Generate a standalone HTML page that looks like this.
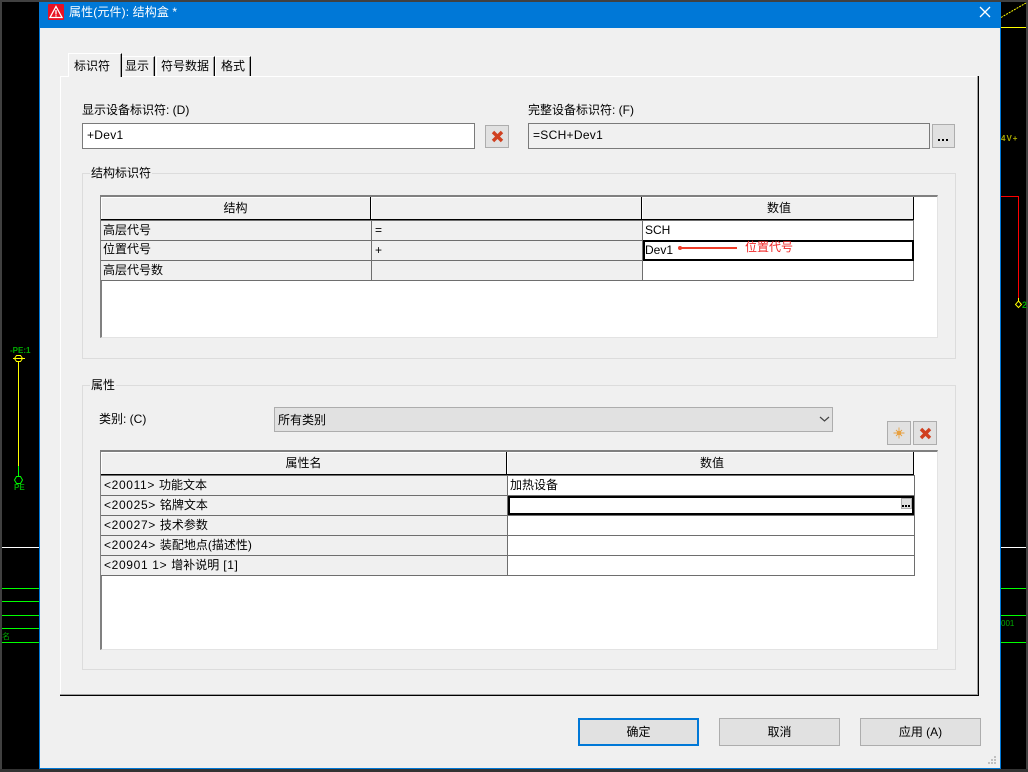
<!DOCTYPE html>
<html><head><meta charset="utf-8"><style>
html,body{margin:0;padding:0}
body{width:1028px;height:772px;overflow:hidden;position:relative;background:#000;font:12px/16px "Liberation Sans","Noto Sans CJK SC",sans-serif;color:#000}
div,span.t{position:absolute;box-sizing:border-box}
.t{white-space:nowrap}
.btn{background:#e1e1e1;border:1px solid #adadad;text-align:center}
.inp{border:1px solid #7a7a7a;background:#fff;padding:3px 4px;letter-spacing:.3px}
.grp{border:1px solid #dcdcdc}
.gb{background:#f0f0f0;padding:0 1px}
.h{background:#f0f0f0;text-align:center;line-height:22px;border-bottom:1px solid #000;border-right:1px solid #000;box-shadow:inset 1px 1px 0 #fff}
.c{line-height:19px;padding-left:2px;overflow:hidden;white-space:nowrap;border-bottom:1px solid #6e6e6e;border-right:1px solid #6e6e6e}
.g{background:#f0f0f0}
.w{background:#fff}
.l{letter-spacing:.65px}
.tab{background:#f0f0f0;border-top:1px solid #fff;border-left:1px solid #fff;border-right:1px solid #000;box-shadow:inset -1px 0 0 #a0a0a0}
</style></head><body>
<svg width="1028" height="772" style="position:absolute;left:0;top:0">
<rect x="0" y="0" width="2" height="772" fill="#404040"/>
<rect x="1026" y="0" width="2" height="772" fill="#404040"/>
<rect x="0" y="0" width="1028" height="2" fill="#404040"/>
<rect x="0" y="769" width="1028" height="3" fill="#333"/>
<path d="M1001 17.5L1026 3" stroke="#ff0" stroke-width="1" stroke-dasharray="2 1"/>
<path d="M1001 27.5H1026" stroke="#ff0"/>
<path d="M2 547.5H39M1001 547.5H1026" stroke="#fff"/>
<path d="M2 588.5H39M2 601.5H39M2 615.5H39M2 628.5H39M2 642.5H39M1001 588.5H1026M1001 615.5H1026M1001 642.5H1026" stroke="#0f0"/>
<path d="M18.500 362V466" stroke="#ff0"/><path d="M18.500 466V476" stroke="#0f0"/>
<path d="M13 358.500H25M16.500 355.500H20.500L22.500 358.500L20.500 361.500H16.500L14.500 358.500Z" stroke="#ff0" fill="none"/>
<path d="M16.500 476.500H20.500L22.500 480L20.500 483.500H16.500L14.500 480Z" stroke="#0f0" fill="none"/>
<path d="M1001 196.500H1018.500V298" stroke="#f00" fill="none"/>
<path d="M1018.500 298V301M1018.500 301L1021.500 304.500L1018.500 307.500L1015.500 304.500Z" stroke="#ff0" fill="none"/>
<text x="10" y="353" font-size="8" font-weight="bold" fill="#0a0" font-family="Liberation Sans">-PE:1</text>
<text x="14" y="490" font-size="8" font-weight="bold" fill="#0a0" font-family="Liberation Sans">PE</text>
<text x="1022" y="308" font-size="9" font-weight="bold" fill="#0a0" font-family="Liberation Sans">2</text>
<text x="1001" y="141" font-size="8" font-weight="bold" fill="#aa0" font-family="Liberation Sans" letter-spacing="1">4V+</text>
<text x="1001" y="626" font-size="8" fill="#0a0" font-family="Liberation Sans">001</text>
<text x="2" y="639" font-size="8" fill="#0a0" font-family="Noto Sans CJK SC">名</text>
</svg>

<!-- window -->
<div style="left:39px;top:2px;width:962px;height:767px;background:#f0f0f0;border:1px solid #0078d7;border-top:0"></div>
<div style="left:39px;top:2px;width:962px;height:26px;background:#0078d7"></div>
<svg width="17" height="16" style="position:absolute;left:48px;top:4px">
<rect width="16" height="16" x="0" y="0" fill="#e81123" rx="1"/>
<path d="M8 2.500L14 13.500H2Z" fill="none" stroke="#fff" stroke-width="1.300"/>
<path d="M8 6V10.500M8 11.200V12.500" stroke="#fff" stroke-width="1.300"/>
</svg>
<span class="t" style="left:69px;top:4px;color:#fff;font-size:12px;letter-spacing:.12px">属性(元件): 结构盒 *</span>
<svg width="12" height="12" style="position:absolute;left:979px;top:6px"><path d="M1 1L11 11M11 1L1 11" stroke="#fff" stroke-width="1.300"/></svg>

<!-- tab page -->
<div style="left:60px;top:76px;width:919px;height:620px;background:#f0f0f0;border:1px solid #fff;border-right:0;border-bottom:0"></div>
<div style="left:977px;top:76px;width:1px;height:619px;background:#a0a0a0"></div>
<div style="left:978px;top:76px;width:1px;height:620px;background:#000"></div>
<div style="left:60px;top:694px;width:918px;height:1px;background:#a0a0a0"></div>
<div style="left:60px;top:695px;width:919px;height:1px;background:#000"></div>

<!-- tabs -->
<div class="tab" style="left:68px;top:53px;width:54px;height:24px"></div>
<span class="t" style="left:74px;top:58px">标识符</span>
<div class="tab" style="left:122px;top:56px;width:33px;height:20px;border-left:0"></div>
<span class="t" style="left:125px;top:58px">显示</span>
<div class="tab" style="left:156px;top:56px;width:59px;height:20px"></div>
<span class="t" style="left:161px;top:58px">符号数据</span>
<div class="tab" style="left:215px;top:56px;width:36px;height:20px"></div>
<span class="t" style="left:221px;top:58px">格式</span>

<!-- top fields -->
<span class="t" style="left:82px;top:102px">显示设备标识符: (D)</span>
<div class="inp" style="left:82px;top:123px;width:393px;height:26px">+Dev1</div>
<div class="btn" style="left:485px;top:125px;width:24px;height:23px"></div>
<svg width="14" height="14" style="position:absolute;left:491px;top:130px"><path d="M2 2L11 11M11 2L2 11" stroke="#d04020" stroke-width="3.400"/></svg>
<span class="t" style="left:528px;top:102px">完整设备标识符: (F)</span>
<div class="inp" style="left:528px;top:123px;width:402px;height:26px;background:#f0f0f0">=SCH+Dev1</div>
<div class="btn" style="left:932px;top:124px;width:23px;height:24px"></div>
<svg width="12" height="3" style="position:absolute;left:938px;top:139px"><path d="M0 0h2v2h-2zM4 0h2v2h-2zM8 0h2v2h-2z" fill="#000"/></svg>

<!-- group 1 -->
<div class="grp" style="left:82px;top:173px;width:874px;height:186px"></div>
<span class="t gb" style="left:90px;top:165px">结构标识符</span>
<div style="left:100px;top:195px;width:838px;height:143px;background:#fff;border-left:2px solid #808080;border-top:2px solid #808080;border-right:1px solid #e3e3e3;border-bottom:1px solid #e3e3e3"></div>
<div class="h" style="left:101px;top:197px;width:270px;height:23px">结构</div>
<div class="h" style="left:371px;top:197px;width:271px;height:23px"></div>
<div class="h" style="left:642px;top:197px;width:272px;height:23px;padding-left:3px">数值</div>
<div class="c g" style="left:101px;top:220px;width:271px;height:21px;border-top:1px solid #6e6e6e">高层代号</div>
<div class="c g" style="left:101px;top:241px;width:271px;height:20px;line-height:17px">位置代号</div>
<div class="c g" style="left:101px;top:261px;width:271px;height:20px">高层代号数</div>
<div class="c g" style="left:372px;top:220px;width:271px;height:21px;border-top:1px solid #6e6e6e;padding-left:3px">=</div>
<div class="c g" style="left:372px;top:241px;width:271px;height:20px;padding-left:3px">+</div>
<div class="c g" style="left:372px;top:261px;width:271px;height:20px"></div>
<div class="c w" style="left:643px;top:220px;width:271px;height:21px;border-top:1px solid #6e6e6e">SCH</div>
<div class="c w" style="left:643px;top:261px;width:271px;height:20px"></div>
<div class="c w" style="left:643px;top:240px;width:271px;height:21px;border:2px solid #000;padding-left:0;line-height:17px">Dev1</div>
<svg width="62" height="8" style="position:absolute;left:676px;top:244px"><circle cx="4" cy="4" r="2" fill="#f03c28"/><path d="M4 4H61" stroke="#f03c28" stroke-width="2"/></svg>
<span class="t" style="left:745px;top:239px;color:#f02828">位置代号</span>

<!-- group 2 -->
<div class="grp" style="left:82px;top:385px;width:874px;height:285px"></div>
<span class="t gb" style="left:90px;top:377px">属性</span>
<span class="t" style="left:99px;top:411px">类别: (C)</span>
<div class="btn" style="left:274px;top:407px;width:559px;height:25px;text-align:left;padding:4px 3px">所有类别</div>
<svg width="12" height="8" style="position:absolute;left:819px;top:416px"><path d="M1 1L5.500 5L10 1" fill="none" stroke="#444" stroke-width="1.200"/></svg>
<div class="btn" style="left:887px;top:421px;width:24px;height:24px"></div>
<svg width="14" height="14" style="position:absolute;left:892px;top:426px"><path d="M7 1.500V12.500M1.500 7H12.500M4 4L10 10M10 4L4 10" stroke="#e8a040" stroke-width=".9"/><rect x="5" y="5" width="4" height="4" fill="#e8a040"/></svg>
<div class="btn" style="left:913px;top:421px;width:24px;height:24px"></div>
<svg width="14" height="14" style="position:absolute;left:919px;top:427px"><path d="M2 2L11 11M11 2L2 11" stroke="#d04020" stroke-width="3.400"/></svg>

<div style="left:100px;top:450px;width:838px;height:200px;background:#fff;border-left:2px solid #808080;border-top:2px solid #808080;border-right:1px solid #e3e3e3;border-bottom:1px solid #e3e3e3"></div>
<div class="h" style="left:101px;top:452px;width:406px;height:23px">属性名</div>
<div class="h" style="left:507px;top:452px;width:407px;height:23px;padding-left:4px">数值</div>
<div class="c g" style="left:101px;top:475px;width:407px;height:21px;border-top:1px solid #6e6e6e;padding-left:3px"><span class="l">&lt;20011&gt; </span>功能文本</div>
<div class="c g" style="left:101px;top:496px;width:407px;height:20px;padding-left:3px"><span class="l">&lt;20025&gt; </span>铭牌文本</div>
<div class="c g" style="left:101px;top:516px;width:407px;height:20px;padding-left:3px"><span class="l">&lt;20027&gt; </span>技术参数</div>
<div class="c g" style="left:101px;top:536px;width:407px;height:20px;padding-left:3px"><span class="l">&lt;20024&gt; </span>装配地点(描述性)</div>
<div class="c g" style="left:101px;top:556px;width:407px;height:20px;padding-left:3px"><span class="l">&lt;20901 1&gt; </span>增补说明<span class="l"> [1]</span></div>
<div class="c w" style="left:508px;top:475px;width:407px;height:21px;border-top:1px solid #6e6e6e">加热设备</div>
<div class="c w" style="left:508px;top:516px;width:407px;height:20px"></div>
<div class="c w" style="left:508px;top:536px;width:407px;height:20px"></div>
<div class="c w" style="left:508px;top:556px;width:407px;height:20px"></div>
<div style="left:507px;top:495px;width:408px;height:21px;background:#6e6e6e"></div>
<div style="left:508px;top:496px;width:406px;height:19px;background:#fff;border:2px solid #000"></div>
<div class="btn" style="left:901px;top:498px;width:11px;height:11px"></div>
<svg width="9" height="2" style="position:absolute;left:902px;top:505px"><path d="M0 0h2v2h-2zM3 0h2v2h-2zM6 0h2v2h-2z" fill="#000"/></svg>

<!-- bottom buttons -->
<div class="btn" style="left:578px;top:718px;width:121px;height:28px;border:2px solid #0078d7;line-height:24px">确定</div>
<div class="btn" style="left:719px;top:718px;width:121px;height:28px;line-height:26px">取消</div>
<div class="btn" style="left:860px;top:718px;width:121px;height:28px;line-height:26px">应用 (A)</div>
<svg width="12" height="12" style="position:absolute;left:988px;top:756px"><path d="M6 0h2v2h-2zM3 3h2v2h-2zM6 3h2v2h-2zM0 6h2v2h-2zM3 6h2v2h-2zM6 6h2v2h-2z" fill="#c0c0c0"/></svg>
</body></html>
